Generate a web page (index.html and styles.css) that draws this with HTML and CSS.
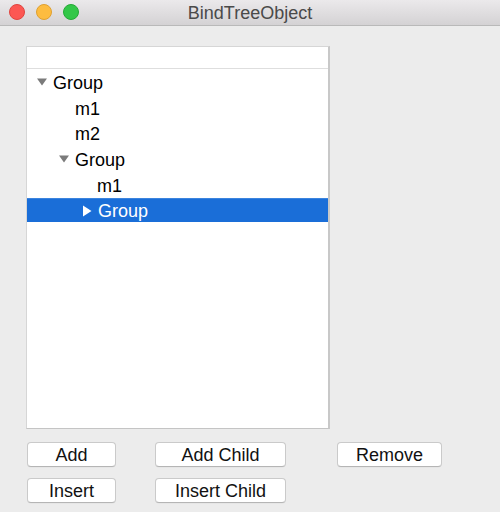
FILE: index.html
```html
<!DOCTYPE html>
<html>
<head>
<meta charset="utf-8">
<title>BindTreeObject</title>
<link rel="stylesheet" href="styles.css">
</head>
<body>
<div class="window">
  <div class="titlebar">
    <div class="lights">
      <span class="light red"></span>
      <span class="light yellow"></span>
      <span class="light green"></span>
    </div>
    <div class="title">BindTreeObject</div>
  </div>
  <div class="content">
    <div class="outline">
      <div class="header"></div>
      <div class="rows">
        <div class="row lvl0">
          <span class="disc"><svg width="10" height="8" viewBox="0 0 10 8"><polygon points="0,0.5 10,0.5 5,7.5" fill="#7b7b7b"/></svg></span>
          <span class="label">Group</span>
        </div>
        <div class="row lvl1">
          <span class="disc"></span>
          <span class="label">m1</span>
        </div>
        <div class="row lvl1">
          <span class="disc"></span>
          <span class="label">m2</span>
        </div>
        <div class="row lvl1">
          <span class="disc"><svg width="10" height="8" viewBox="0 0 10 8"><polygon points="0,0.5 10,0.5 5,7.5" fill="#7b7b7b"/></svg></span>
          <span class="label">Group</span>
        </div>
        <div class="row lvl2">
          <span class="disc"></span>
          <span class="label">m1</span>
        </div>
        <div class="row lvl2 selected">
          <span class="disc"><svg width="10" height="12" viewBox="0 0 10 12"><polygon points="1,0.5 9.5,6 1,11.5" fill="#ffffff"/></svg></span>
          <span class="label">Group</span>
        </div>
      </div>
    </div>
    <div class="buttons">
      <button class="btn">Add</button>
      <button class="btn">Add Child</button>
      <button class="btn remove">Remove</button>
      <button class="btn">Insert</button>
      <button class="btn">Insert Child</button>
    </div>
  </div>
</div>
</body>
</html>
```
FILE: styles.css
```css
html, body {
  margin: 0;
  padding: 0;
  background: #ececec;
}
body {
  font-family: "Liberation Sans", Arial, Helvetica, sans-serif;
  width: 500px;
  height: 512px;
  overflow: hidden;
}
.window {
  width: 500px;
  height: 512px;
  background: #ececec;
}
.titlebar {
  height: 25px;
  border-bottom: 1px solid #b9b9b9;
  background: linear-gradient(#ebe9eb, #d4d2d4);
  display: flex;
  align-items: center;
  position: relative;
}
.lights {
  display: flex;
  gap: 11px;
  padding-left: 9px;
  margin-top: -1px;
}
.light {
  width: 16px;
  height: 16px;
  border-radius: 50%;
  box-sizing: border-box;
}
.red { background: #fc5753; border: 1px solid #e0443f; }
.yellow { background: #fdbc40; border: 1px solid #dfa031; }
.green { background: #33c748; border: 1px solid #25a936; }
.title {
  position: absolute;
  left: 0;
  right: 0;
  top: 0;
  height: 25px;
  line-height: 26px;
  text-align: center;
  font-size: 18px;
  color: #4a4a4a;
  pointer-events: none;
}
.content {
  padding: 20px 0 0 26px;
}
.outline {
  width: 301px;
  height: 381px;
  background: #ffffff;
  border: 1px solid #d6d6d6;
  border-right: 2px solid #c8c8c8;
  border-bottom: 1px solid #c4c4c4;
}
.header {
  height: 21px;
  border-bottom: 1px solid #dedede;
}
.rows {
  display: flex;
  flex-direction: column;
}
.row {
  height: 25.6px;
  display: flex;
  align-items: center;
  font-size: 18px;
  color: #000;
  box-sizing: border-box;
}
.row.selected {
  background: #1a6ed8;
  color: #fff;
  height: 24px;
  margin-top: 0.6px;
  border-top: 1px solid #3b84de;
}
.lvl0 { padding-left: 10px; }
.lvl1 { padding-left: 32px; }
.lvl2 { padding-left: 54px; }
.disc {
  width: 16px;
  flex: 0 0 16px;
  display: flex;
  align-items: center;
  padding-top: 1px;
}
.disc svg { display: block; }
.selected .disc { padding-left: 1px; }
.label {
  line-height: 1;
  padding-top: 3px;
}
.selected .label {
  padding-top: 1px;
}
.buttons {
  display: grid;
  grid-template-columns: 89px 131px 117px;
  column-gap: 39px;
  row-gap: 11px;
  margin-top: 13px;
  padding-left: 1px;
}
.btn {
  height: 25px;
  background: #ffffff;
  border: 1px solid #cacaca;
  border-bottom-color: #b5b5b5;
  border-radius: 4px;
  font-family: "Liberation Sans", Arial, Helvetica, sans-serif;
  font-size: 18px;
  color: #111;
  padding: 0;
  line-height: 22px;
  text-align: center;
  box-shadow: 0 0.5px 0 rgba(0,0,0,0.05);
}
.remove {
  justify-self: end;
  width: 105px;
}
```
